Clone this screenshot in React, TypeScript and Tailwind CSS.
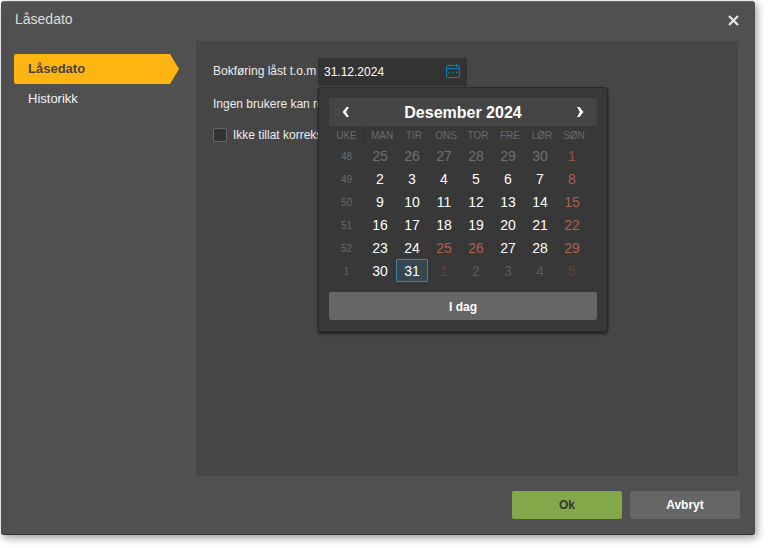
const font = { fontFamily: '"Liberation Sans", Arial, sans-serif' };

type Day = { d: number; c: string; sel?: boolean };
const W = "text-white";
const R = "text-[#b0604f]";
const G = "text-[#6f6f6f]";
const RD = "text-[#5a4440]";
const GD = "text-[#5c5c5c]";

const rows: { wk: number; wkc: string; days: Day[] }[] = [
  { wk: 48, wkc: "text-[#6a6a6a]", days: [{ d: 25, c: G }, { d: 26, c: G }, { d: 27, c: G }, { d: 28, c: G }, { d: 29, c: G }, { d: 30, c: G }, { d: 1, c: "text-[#8f5548]" }] },
  { wk: 49, wkc: "text-[#6a6a6a]", days: [{ d: 2, c: W }, { d: 3, c: W }, { d: 4, c: W }, { d: 5, c: W }, { d: 6, c: W }, { d: 7, c: W }, { d: 8, c: R }] },
  { wk: 50, wkc: "text-[#6a6a6a]", days: [{ d: 9, c: W }, { d: 10, c: W }, { d: 11, c: W }, { d: 12, c: W }, { d: 13, c: W }, { d: 14, c: W }, { d: 15, c: R }] },
  { wk: 51, wkc: "text-[#6a6a6a]", days: [{ d: 16, c: W }, { d: 17, c: W }, { d: 18, c: W }, { d: 19, c: W }, { d: 20, c: W }, { d: 21, c: W }, { d: 22, c: R }] },
  { wk: 52, wkc: "text-[#6a6a6a]", days: [{ d: 23, c: W }, { d: 24, c: W }, { d: 25, c: R }, { d: 26, c: R }, { d: 27, c: W }, { d: 28, c: W }, { d: 29, c: R }] },
  { wk: 1, wkc: "text-[#5f6770]", days: [{ d: 30, c: W }, { d: 31, c: W, sel: true }, { d: 1, c: RD }, { d: 2, c: GD }, { d: 3, c: GD }, { d: 4, c: GD }, { d: 5, c: RD }] },
];

const heads = ["MAN", "TIR", "ONS", "TOR", "FRE", "LØR", "SØN"];

function Calendar() {
  return (
    <div className="absolute left-0 top-[29px] z-10 w-[290px] h-[245px] rounded-[3px] bg-[#383838] border border-[#2a2a2a] shadow-[0_2px_3px_rgba(0,0,0,0.55)] px-[10px] pt-[10px]">
      <div className="h-[28px] bg-[#454545] flex items-center justify-between pl-[13px] pr-[13px]">
        <svg width="8" height="10" viewBox="0 0 8 10"><path d="M4.6 0H7L4 5l3 5H4.6L0.6 5z" fill="#fff" /></svg>
        <span className="text-white font-bold text-[16px] leading-none relative top-[1px]">Desember 2024</span>
        <svg width="8" height="10" viewBox="0 0 8 10"><path d="M3.4 0H1l3 5-3 5h2.4l4-5z" fill="#fff" /></svg>
      </div>
      <div className="flex h-[18px] items-center text-[10px] text-[#6b6b6b]">
        <div className="w-[36px] text-center border-r border-[#2e2e2e] h-[18px] leading-[19px]">UKE</div>
        <div className="flex ml-[1px]">
          {heads.map((h) => (
            <div key={h} className="w-[32px] text-center leading-[19px]">{h}</div>
          ))}
        </div>
      </div>
      <div className="flex flex-col">
        {rows.map((r) => (
          <div key={r.wk} className="flex h-[23px] items-center">
            <div className={`w-[35px] text-center text-[10px] pt-[2px] ${r.wkc}`}>{r.wk}</div>
            {r.days.map((x, i) => (
              <div
                key={i}
                className={`w-[32px] h-[23px] flex items-start justify-center text-[14px] leading-[21px] ${x.c} ${x.sel ? "pt-[1px] bg-[#36474f] border border-[#3d86a3] rounded-[1px]" : "pt-[2px]"}`}
              >
                {x.d}
              </div>
            ))}
          </div>
        ))}
      </div>
      <button className="mt-[10px] w-full h-[28px] pt-[1px] rounded-[2px] bg-[#666666] text-white font-bold text-[12px]">I dag</button>
    </div>
  );
}

export default function App() {
  return (
    <div style={font} className="w-[768px] h-[548px] bg-white pl-[1px] pt-[1px] overflow-hidden">
      <div className="w-[754px] h-[534px] rounded-[3px] bg-[#505050] border-t border-t-[#6a6a6a] border-b border-b-[#333333] shadow-[2px_3px_8px_rgba(0,0,0,0.4)] flex flex-col">
        <div className="h-[39px] shrink-0 flex items-center justify-between pl-[14px] pr-[16px] pb-[2px]">
          <span className="text-[14px] text-[#dddddd] relative top-[-1px]">Låsedato</span>
          <svg width="11" height="11" viewBox="0 0 11 11"><path d="M1 1l9 9M10 1l-9 9" stroke="#e8e8e8" strokeWidth="2.2" /></svg>
        </div>
        <div className="flex flex-1 min-h-0 pr-[17px]">
          <div className="w-[195px] shrink-0 pl-[13px] pt-[13px] text-[13px]">
            <div
              className="w-[165px] h-[30px] bg-[#ffb511] rounded-l-[2px] text-[#444444] font-bold flex items-center pl-[14px]"
              style={{ clipPath: "polygon(0 0, 156px 0, 100% 50%, 156px 100%, 0 100%)" }}
            >
              Låsedato
            </div>
            <div className="h-[30px] text-[#f4f4f4] flex items-center pl-[14px]">Historikk</div>
          </div>
          <div className="flex-1 h-[435px] bg-[#464646] pl-[17px] text-[12px] text-[#eeeeee]">
            <div className="flex items-center h-[28px] mt-[17px] relative">
              <span className="w-[105px] shrink-0 whitespace-nowrap relative top-[-1px]">Bokføring låst t.o.m</span>
              <div className="relative w-[149px] h-[28px] bg-[#333333] flex items-center justify-between pl-[6px] pr-[6px]">
                <span className="text-white">31.12.2024</span>
                <svg width="15" height="16" viewBox="0 0 15 16" fill="none" stroke="#0780ad" strokeWidth="1">
                  <rect x="0.5" y="1.5" width="13" height="12" rx="1.5" />
                  <path d="M0.5 4.5h13M3.5 0v3M10.5 0v3" />
                  <path d="M2.5 8.5h1.5M6.2 8.5h1.5M10 8.5h1.5" strokeWidth="1.5" />
                </svg>
                <Calendar />
              </div>
            </div>
            <div className="mt-[11px] h-[14px] leading-[14px] w-[105px] whitespace-nowrap">Ingen brukere kan registrere</div>
            <div className="mt-[15px] flex items-center gap-[6px] whitespace-nowrap">
              <span className="w-[14px] h-[14px] rounded-[2px] bg-[#333333] border border-[#666666] shrink-0" />
              <span>Ikke tillat korreksjoner</span>
            </div>
          </div>
        </div>
        <div className="h-[58px] shrink-0 flex justify-end gap-[8px] pt-[15px] pr-[15px] text-[12px] font-bold">
          <button className="w-[110px] h-[28px] rounded-[2px] bg-[#83a84a] text-[#333333]">Ok</button>
          <button className="w-[110px] h-[28px] rounded-[2px] bg-[#666666] text-white">Avbryt</button>
        </div>
      </div>
    </div>
  );
}
